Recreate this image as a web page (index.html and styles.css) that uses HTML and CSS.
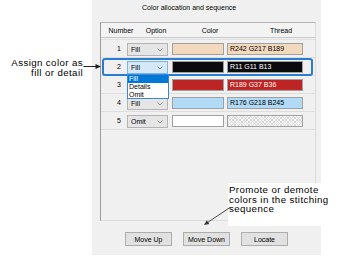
FILE: index.html
```html
<!DOCTYPE html>
<html>
<head>
<meta charset="utf-8">
<link rel="stylesheet" href="styles.css">
</head>
<body>
<div class="page">
  <div class="panel">
    <div class="group-title">Color allocation and sequence</div>
    <div class="list">
      <div class="list-head">
        <span class="h-num">Number</span>
        <span class="h-opt">Option</span>
        <span class="h-col">Color</span>
        <span class="h-thr">Thread</span>
      </div>
      <div class="rows">
        <div class="row">
          <span class="num">1</span>
          <span class="combo">Fill<svg class="chev" viewBox="0 0 6 4" width="6" height="4"><path d="M0.5 0.5 L3 3 L5.5 0.5" fill="none" stroke="#7a7a7a" stroke-width="0.8"/></svg></span>
          <span class="swatch c-peach"></span>
          <span class="thread c-peach">R242 G217 B189</span>
        </div>
        <div class="row">
          <span class="num">2</span>
          <span class="combo combo-focus">Fill<svg class="chev" viewBox="0 0 6 4" width="6" height="4"><path d="M0.5 0.5 L3 3 L5.5 0.5" fill="none" stroke="#4a6a8a" stroke-width="0.8"/></svg></span>
          <span class="swatch c-black"></span>
          <span class="thread c-black">R11 G11 B13</span>
        </div>
        <div class="row">
          <span class="num">3</span>
          <span class="combo combo-covered"></span>
          <span class="swatch c-red"></span>
          <span class="thread c-red">R189 G37 B36</span>
        </div>
        <div class="row">
          <span class="num">4</span>
          <span class="combo">Fill<svg class="chev" viewBox="0 0 6 4" width="6" height="4"><path d="M0.5 0.5 L3 3 L5.5 0.5" fill="none" stroke="#7a7a7a" stroke-width="0.8"/></svg></span>
          <span class="swatch c-blue"></span>
          <span class="thread c-blue">R176 G218 B245</span>
        </div>
        <div class="row">
          <span class="num">5</span>
          <span class="combo">Omit<svg class="chev" viewBox="0 0 6 4" width="6" height="4"><path d="M0.5 0.5 L3 3 L5.5 0.5" fill="none" stroke="#7a7a7a" stroke-width="0.8"/></svg></span>
          <span class="swatch c-white"></span>
          <span class="thread c-none"></span>
        </div>
      </div>
      <div class="row-highlight"></div>
      <div class="dropdown">
        <div class="dd-item dd-selected">Fill</div>
        <div class="dd-item">Details</div>
        <div class="dd-item">Omit</div>
      </div>
    </div>
    <div class="buttons">
      <button class="btn">Move Up</button>
      <button class="btn">Move Down</button>
      <button class="btn">Locate</button>
    </div>
  </div>

  <div class="callout callout-left">Assign color as<br>fill or detail</div>
  <div class="callout callout-right">Promote or demote<br>colors in the stitching<br>sequence</div>

  <svg class="arrows" width="364" height="269" viewBox="0 0 364 269">
    <line x1="83.5" y1="66.5" x2="97" y2="66.5" stroke="#222" stroke-width="1"/>
    <polygon points="101,66.5 95.5,64 95.5,69" fill="#222"/>
    <line x1="230" y1="207.5" x2="207.5" y2="222.5" stroke="#333" stroke-width="0.9"/>
    <polygon points="204,225 209.4,224 206.8,220.3" fill="#333"/>
  </svg>
</div>
</body>
</html>
```

FILE: styles.css
```css
* {
  box-sizing: border-box;
  margin: 0;
  padding: 0;
}

body {
  background: #ffffff;
  font-family: "Liberation Sans", Arial, sans-serif;
  color: #000;
}

.page {
  position: relative;
  width: 364px;
  height: 269px;
  overflow: hidden;
}

.panel {
  margin-left: 92px;
  width: 229px;
  height: 255px;
  background: #f0f0f0;
  display: flex;
  flex-direction: column;
}

.group-title {
  height: 22px;
  padding-left: 50px;
  font-size: 7px;
  line-height: 16px;
}

.list {
  position: relative;
  margin-left: 8px;
  width: 216px;
  height: 199px;
  border-left: 1px solid #9a9a9a;
  border-top: 1px solid #b4b4b4;
  border-right: 1px solid #dcdcdc;
  border-bottom: 1px solid #dcdcdc;
}

.list-head {
  display: flex;
  align-items: center;
  height: 15px;
  font-size: 7px;
  background: #f3f3f3;
  border-bottom: 1px solid #c8c8c8;
}

.h-num { width: 40px; text-align: center; }
.h-opt { width: 30px; text-align: center; }
.h-col { width: 78px; text-align: center; }
.h-thr { width: 64px; text-align: center; }

.rows {
  margin-top: 1px;
  border-top: 1px solid #e2e2e2;
}

.row {
  display: flex;
  align-items: flex-start;
  height: 18px;
  border-bottom: 1px solid #dedede;
  font-size: 7px;
}

.num {
  width: 24px;
  padding-right: 4px;
  text-align: right;
  line-height: 17px;
}

.combo {
  position: relative;
  margin-left: 2px;
  margin-top: 3px;
  width: 41px;
  height: 13px;
  padding-left: 3px;
  line-height: 11px;
  background: #e5e5e5;
  border: 1px solid #b4b4b4;
}

.combo-focus {
  background: #d5e8f8;
  border-color: #7eb4ea;
}

.chev {
  position: absolute;
  right: 4px;
  top: 4px;
}

.swatch {
  margin-left: 4px;
  margin-top: 3px;
  width: 52px;
  height: 12px;
  border: 1px solid #a0a0a0;
}

.thread {
  margin-left: 3px;
  margin-top: 3px;
  width: 76px;
  height: 12px;
  padding-left: 2px;
  line-height: 10px;
  border: 1px solid #a0a0a0;
  white-space: nowrap;
}

.c-peach { background: #f2d9bd; }
.c-black { background: #0b0b0d; color: #fff; }
.c-red { background: #bd2524; color: #fff; }
.c-blue { background: #b0daf5; }
.c-white { background: #ffffff; }
.c-none {
  background-color: #fafafa;
  background-image:
    repeating-linear-gradient(45deg, #d6d6d6 0 0.7px, transparent 0.7px 2.5px),
    repeating-linear-gradient(-45deg, #d6d6d6 0 0.7px, transparent 0.7px 2.5px);
}

.row-highlight {
  position: absolute;
  left: 1px;
  top: 35px;
  width: 211px;
  height: 18px;
  border: 2px solid #2a7cd0;
  border-radius: 3px;
}

.dropdown {
  position: absolute;
  left: 26px;
  top: 51px;
  width: 42px;
  height: 25px;
  background: #fff;
  border: 1px solid #3c86d4;
  font-size: 7px;
}

.dd-item {
  height: 8px;
  line-height: 8px;
  padding-left: 1px;
}

.dd-selected {
  background: #0078d7;
  color: #fff;
}

.buttons {
  display: flex;
  gap: 11px;
  margin-top: 11px;
  padding-left: 33px;
}

.btn {
  width: 47px;
  height: 14px;
  background: #e1e1e1;
  border: 1px solid #adadad;
  font-family: "Liberation Sans", Arial, sans-serif;
  font-size: 7px;
  color: #000;
}

.callout {
  position: absolute;
  font-size: 9.7px;
  letter-spacing: 0.4px;
  line-height: 9.5px;
  color: #000;
}

.callout-left {
  left: 0;
  top: 58px;
  width: 83px;
  text-align: right;
}

.callout-right {
  left: 228px;
  top: 183px;
  width: 93px;
  height: 43px;
  padding-left: 1px;
  padding-top: 2px;
  background: #fff;
  white-space: nowrap;
}

.arrows {
  position: absolute;
  left: 0;
  top: 0;
  pointer-events: none;
}
```
